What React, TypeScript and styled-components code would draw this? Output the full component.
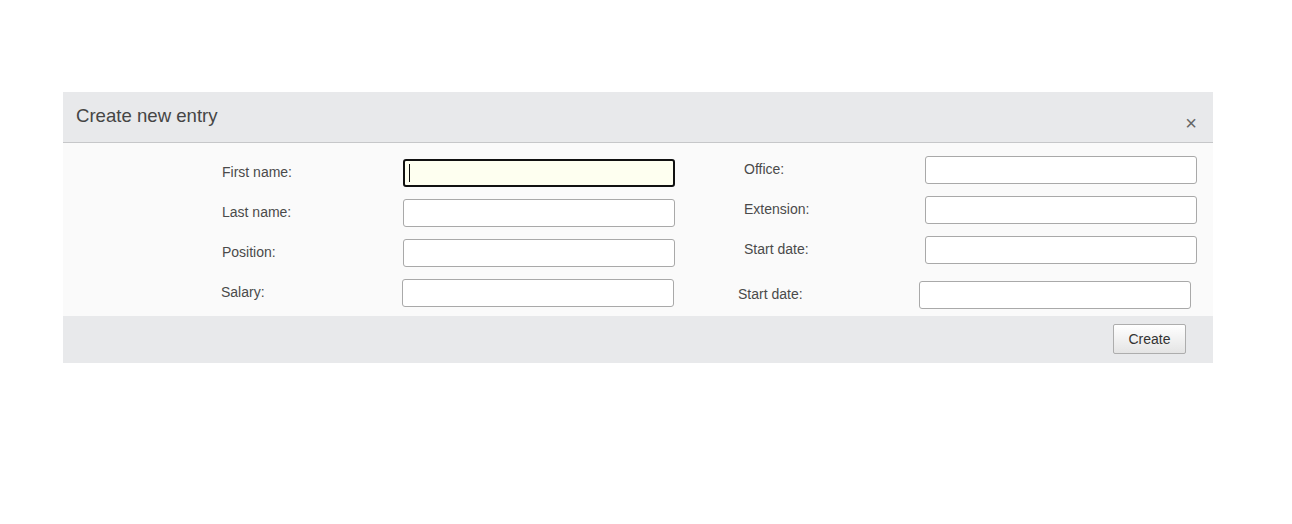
import React from "react";
import styled, { createGlobalStyle } from "styled-components";

const Global = createGlobalStyle`
  html, body { margin: 0; padding: 0; background: #ffffff; }
  body { font-family: "Liberation Sans", Arial, sans-serif; }
  * { box-sizing: border-box; }
`;

const Page = styled.div`
  width: 1292px;
  height: 524px;
  padding: 92px 0 0 63px;
`;

const Dialog = styled.section`
  width: 1150px;
  display: flex;
  flex-direction: column;
`;

const Header = styled.header`
  height: 51px;
  background: #e8e9eb;
  border-bottom: 1px solid #c6c7c9;
  display: flex;
  align-items: center;
  justify-content: space-between;
  padding: 0 16px 0 13px;
`;

const Title = styled.h2`
  margin: 0 0 2px 0;
  font-size: 18.6px;
  font-weight: normal;
  color: #454545;
`;

const Close = styled.span`
  margin-top: 11px;
  font-size: 20px;
  line-height: 1;
  font-weight: normal;
  color: #666666;
`;

const Body = styled.div`
  height: 173px;
  background: #fafafa;
  display: grid;
  grid-template-columns: 625px 525px;
`;

const Column = styled.div<{ $padTop: number; $padLeft: number }>`
  display: flex;
  flex-direction: column;
  gap: 12px;
  padding-top: ${(p) => p.$padTop}px;
  padding-left: ${(p) => p.$padLeft}px;
`;

const Row = styled.div<{ $extra?: number; $indent?: number }>`
  display: flex;
  align-items: center;
  height: 28px;
  margin-top: ${(p) => p.$extra ?? 0}px;
  margin-left: ${(p) => p.$indent ?? 0}px;
`;

const Label = styled.label`
  width: 181px;
  padding-bottom: 2px;
  font-size: 14px;
  color: #4a4a4a;
`;

const Field = styled.div`
  position: relative;
  width: 272px;
  height: 28px;
`;

const Input = styled.input<{ $focused?: boolean }>`
  width: 100%;
  height: 100%;
  margin: 0;
  padding: 0 6px;
  font-family: "Liberation Sans", Arial, sans-serif;
  font-size: 14px;
  border-radius: 3px;
  outline: none;
  border: ${(p) => (p.$focused ? "2px solid #111111" : "1px solid #a9a9a9")};
  background: ${(p) => (p.$focused ? "#fefff0" : "#ffffff")};
`;

const Caret = styled.span`
  position: absolute;
  left: 6px;
  top: 5px;
  width: 1px;
  height: 18px;
  background: #111111;
`;

const Footer = styled.footer`
  height: 47px;
  background: #e8e9eb;
  display: flex;
  justify-content: flex-end;
  align-items: flex-start;
  padding: 8px 27px 0 0;
`;

const Button = styled.button`
  width: 73px;
  height: 30px;
  border: 1px solid #adadad;
  border-radius: 2px;
  background: linear-gradient(#ffffff, #e4e4e4);
  font-family: "Liberation Sans", Arial, sans-serif;
  font-size: 14px;
  color: #333333;
  padding: 0;
`;

type FieldDef = { label: string; focused?: boolean; extra?: number; indent?: number };

const left: FieldDef[] = [
  { label: "First name:", focused: true },
  { label: "Last name:" },
  { label: "Position:" },
  { label: "Salary:", indent: -1 },
];

const right: FieldDef[] = [
  { label: "Office:" },
  { label: "Extension:" },
  { label: "Start date:" },
  { label: "Start date:", extra: 5, indent: -6 },
];

const FormRow: React.FC<FieldDef> = ({ label, focused, extra, indent }) => (
  <Row $extra={extra} $indent={indent}>
    <Label>{label}</Label>
    <Field>
      <Input $focused={focused} readOnly />
      {focused && <Caret />}
    </Field>
  </Row>
);

export default function App() {
  return (
    <>
      <Global />
      <Page>
        <Dialog>
          <Header>
            <Title>Create new entry</Title>
            <Close>×</Close>
          </Header>
          <Body>
            <Column $padTop={16} $padLeft={159}>
              {left.map((f, i) => (
                <FormRow key={i} {...f} />
              ))}
            </Column>
            <Column $padTop={13} $padLeft={56}>
              {right.map((f, i) => (
                <FormRow key={i} {...f} />
              ))}
            </Column>
          </Body>
          <Footer>
            <Button>Create</Button>
          </Footer>
        </Dialog>
      </Page>
    </>
  );
}
